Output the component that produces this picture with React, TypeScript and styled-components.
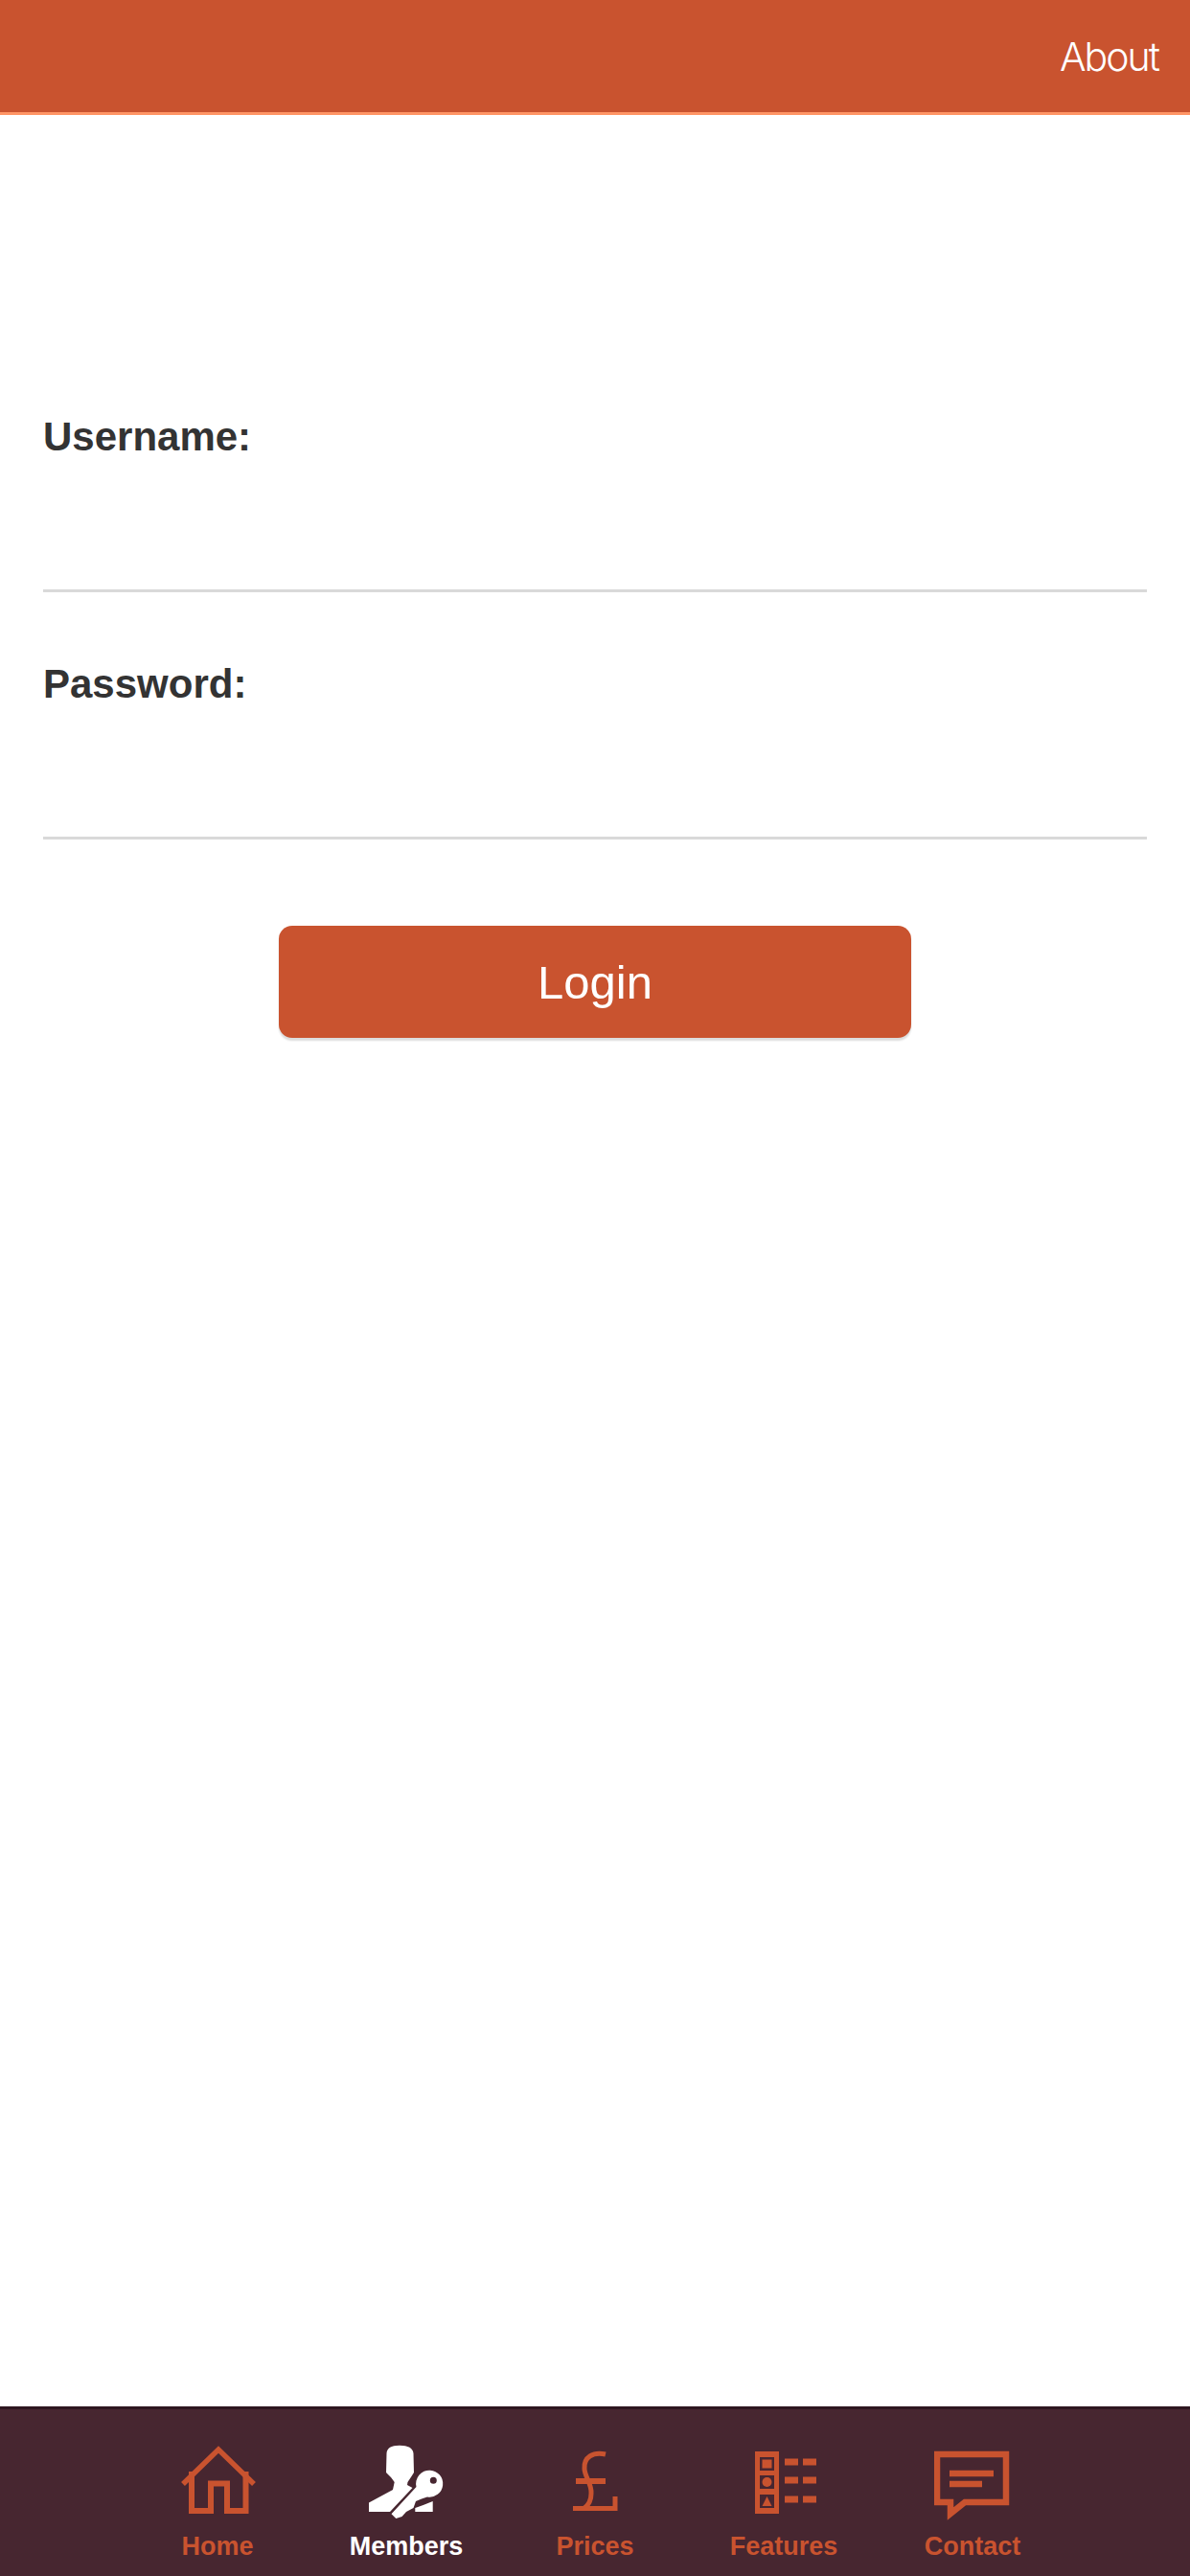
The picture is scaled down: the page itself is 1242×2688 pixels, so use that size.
import styled, { createGlobalStyle } from 'styled-components';

const GlobalStyle = createGlobalStyle`
  html, body {
    margin: 0;
    padding: 0;
    background: #ffffff;
  }

  * {
    box-sizing: border-box;
  }
`;

const ACCENT = '#c9532f';
const DARK = '#472630';

function HomeIcon() {
  return (
    <svg width="80" height="80" viewBox="0 0 80 80" fill="none" stroke={ACCENT} strokeWidth="6">
      <path d="M4 42 L41 6 L78 42" strokeWidth="5.5" />
      <path d="M13 29 V70 H33 V41.5 H50 V70 H69.5 V29" />
    </svg>
  );
}

function MembersIcon() {
  return (
    <svg width="80" height="80" viewBox="0 0 80 80" fill="#ffffff">
      <path d="M33 1.7 C42 1.7 47 4.5 47.5 10 L48 30 L45.5 34 L41.5 40 L41 43 L46.5 46 L23 71 H1 V61.5 L26 48 L27.7 40 L24 35 L19 30 L19.5 10 C20 4.5 24 1.7 33 1.7 Z" />
      <path
        fillRule="evenodd"
        d="M65 27.7 A14 14 0 1 1 62 55.5 L56 57.5 L50 60 L47.5 67 L40 71 L35.5 76 L29.3 78 L24.5 73.3 L50.5 45 A14 14 0 0 1 65 27.7 Z M68.3 34.8 A3.5 3.5 0 1 0 68.3 41.8 A3.5 3.5 0 1 0 68.3 34.8 Z"
      />
      <path d="M49.3 71 V67 L57.7 64 L67.7 60 V71 Z" />
    </svg>
  );
}

function PoundIcon() {
  return (
    <svg width="80" height="80" viewBox="0 0 80 80" fill="none" stroke={ACCENT} strokeWidth="5">
      <path d="M51 11 C38 8 28 14 29 26 C29 34 37 42 36 52 C36 59 33 64 29 67" />
      <path d="M20 39 H51" strokeWidth="6" />
      <path d="M17 67.5 H61 V55" />
    </svg>
  );
}

function FeaturesIcon() {
  return (
    <svg width="80" height="80" viewBox="0 0 80 80" fill={ACCENT}>
      <path
        fillRule="evenodd"
        d="M10 8 H35 V73 H10 Z M15 14 V28 H30 V14 Z M15 33 V47 H30 V33 Z M15 53 V67 H30 V53 Z"
      />
      <rect x="17.5" y="16.5" width="10" height="9" />
      <circle cx="22.5" cy="40" r="5" />
      <path d="M22.5 55 L27.5 65 H17.5 Z" />
      <rect x="41" y="15.5" width="14" height="7" />
      <rect x="60" y="15.5" width="14" height="7" />
      <rect x="41" y="34.5" width="14" height="7" />
      <rect x="60" y="34.5" width="14" height="7" />
      <rect x="41" y="54.5" width="14" height="7" />
      <rect x="60" y="54.5" width="14" height="7" />
    </svg>
  );
}

function ContactIcon() {
  return (
    <svg width="80" height="80" viewBox="0 0 80 80" fill="none" stroke={ACCENT} strokeWidth="6.5">
      <path d="M3 11 H75 V61 H32 L17 73 V61 H3 Z" />
      <path d="M16 31 H62" />
      <path d="M16 42 H50" />
    </svg>
  );
}

const tabs = [
  { label: 'Home', icon: <HomeIcon /> },
  { label: 'Members', icon: <MembersIcon />, active: true },
  { label: 'Prices', icon: <PoundIcon /> },
  { label: 'Features', icon: <FeaturesIcon /> },
  { label: 'Contact', icon: <ContactIcon /> },
];

export default function App() {
  return (
    <>
      <GlobalStyle />
      <Page>
        <Header>
          <AboutLink>About</AboutLink>
        </Header>
        <Main>
          <Field>
            <Label htmlFor="username">Username:</Label>
            <Input id="username" type="text" />
          </Field>
          <Field>
            <Label htmlFor="password">Password:</Label>
            <Input id="password" type="password" />
          </Field>
          <LoginButton type="button">Login</LoginButton>
        </Main>
        <TabBar>
          {tabs.map((tab) => (
            <Tab key={tab.label} $active={tab.active}>
              <TabIcon>{tab.icon}</TabIcon>
              <TabLabel>{tab.label}</TabLabel>
            </Tab>
          ))}
        </TabBar>
      </Page>
    </>
  );
}

const Page = styled.div`
  display: flex;
  flex-direction: column;
  width: 1242px;
  height: 2688px;
  overflow: hidden;
  font-family: 'Liberation Sans', Arial, sans-serif;
  background: #ffffff;
`;

const Header = styled.header`
  display: flex;
  justify-content: flex-end;
  align-items: center;
  flex: 0 0 120px;
  padding: 0 33px 0 0;
  background: ${ACCENT};
  border-bottom: 3px solid #ff9566;
`;

const AboutLink = styled.a`
  font-family: 'Inter', 'Liberation Sans', sans-serif;
  font-size: 41px;
  font-weight: 300;
  letter-spacing: -2px;
  color: #ffffff;
`;

const Main = styled.main`
  display: flex;
  flex-direction: column;
  flex: 1;
  gap: 72px;
  padding: 312px 45px 0;
`;

const Field = styled.div`
  display: flex;
  flex-direction: column;
`;

const Label = styled.label`
  font-size: 42px;
  font-weight: 700;
  line-height: 48px;
  color: #333333;
`;

const Input = styled.input`
  height: 138px;
  padding: 0;
  background: transparent;
  border: 0;
  border-bottom: 3px solid #d9d9d9;
  outline: none;
  font-size: 42px;
`;

const LoginButton = styled.button`
  align-self: center;
  width: 660px;
  height: 117px;
  margin-top: 18px;
  padding: 0;
  background: ${ACCENT};
  border: 0;
  border-radius: 14px;
  box-shadow: 0 3px 2px #dcdcdc;
  font-family: inherit;
  font-size: 49px;
  color: #ffffff;
`;

const TabBar = styled.nav`
  display: flex;
  justify-content: center;
  flex: 0 0 177px;
  background: ${DARK};
  border-top: 3px solid #2e1720;
`;

const Tab = styled.div<{ $active?: boolean }>`
  display: flex;
  flex-direction: column;
  align-items: center;
  width: 197px;
  padding-top: 36px;
  color: ${({ $active }) => ($active ? '#ffffff' : ACCENT)};
`;

const TabIcon = styled.div`
  width: 80px;
  height: 80px;
`;

const TabLabel = styled.span`
  margin-top: 11px;
  font-size: 27px;
  font-weight: 700;
  line-height: 32px;
`;
